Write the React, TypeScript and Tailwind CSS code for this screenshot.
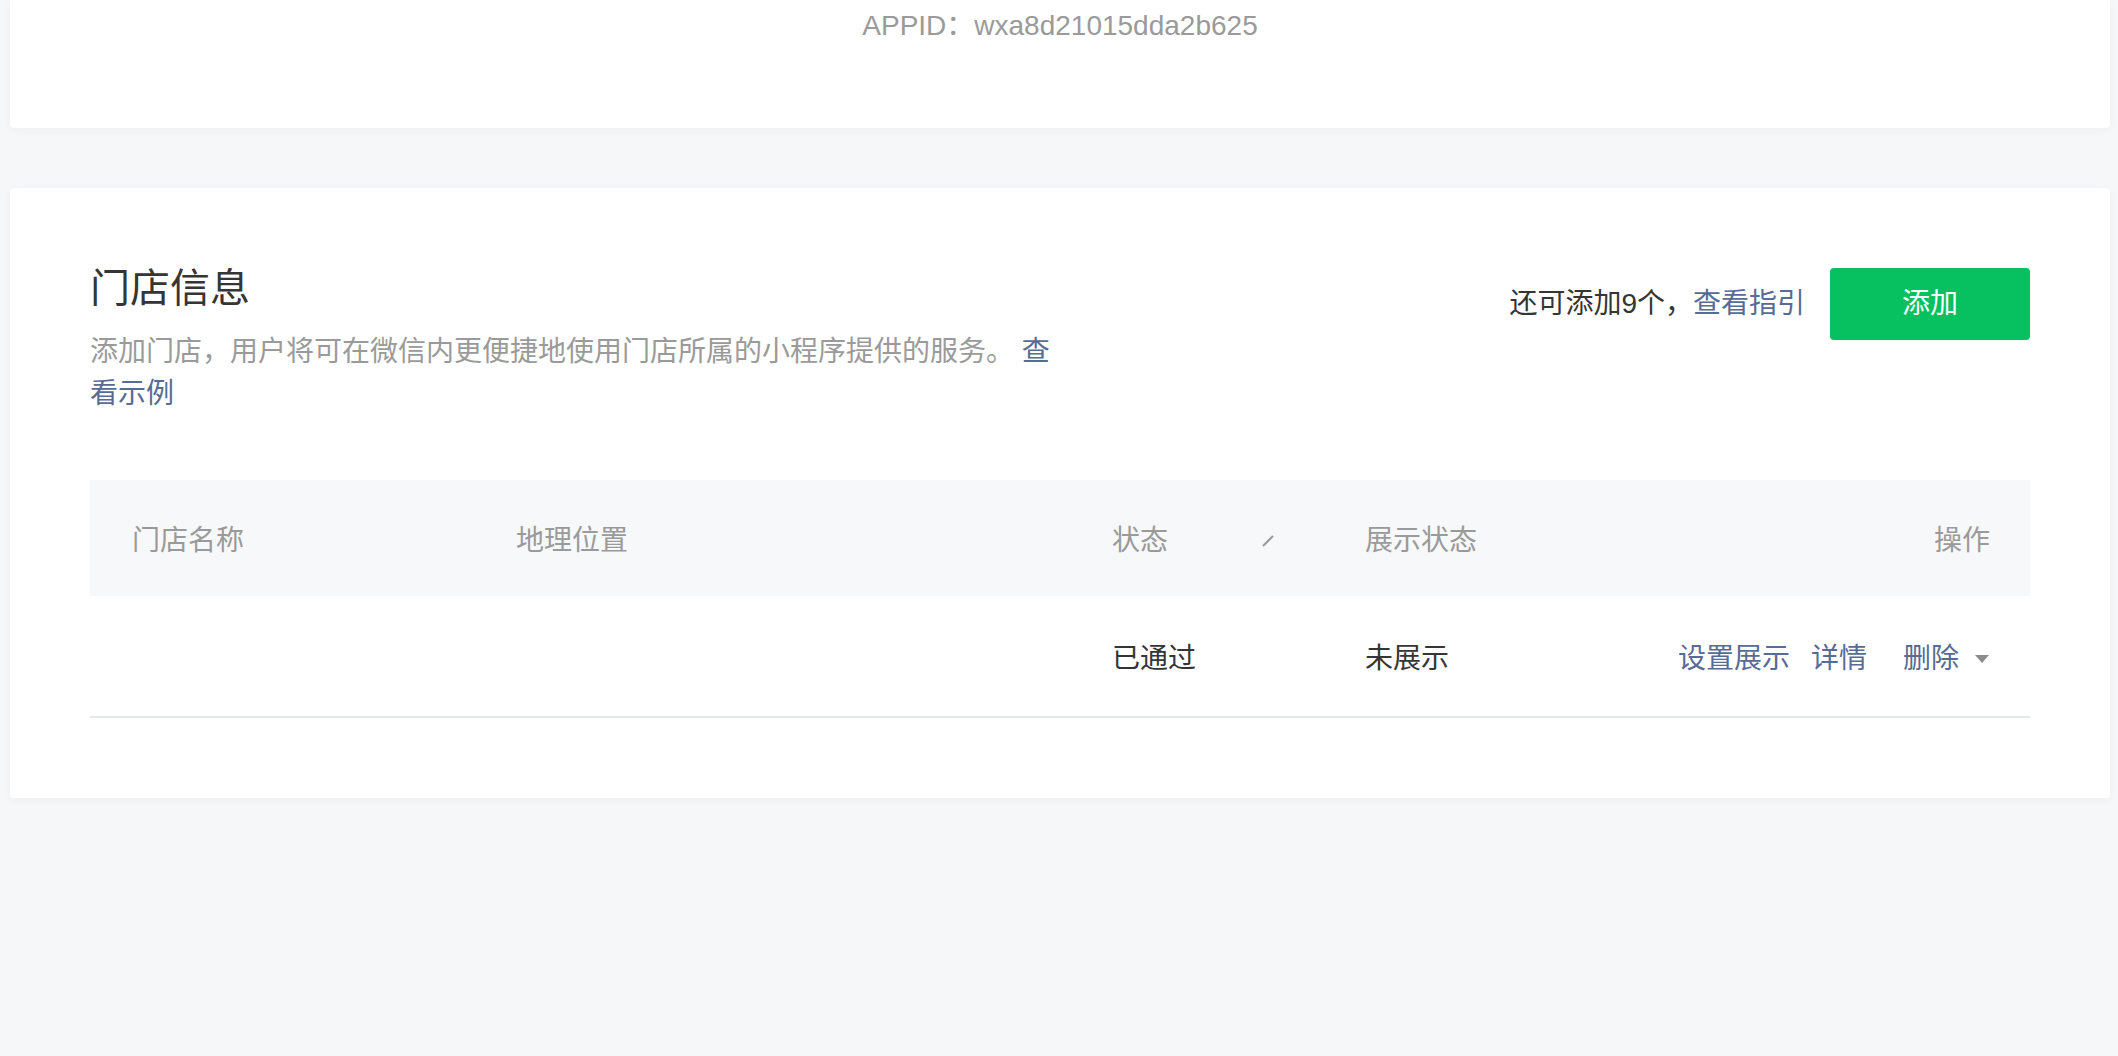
import React from "react";

export default function App() {
  return (
    <div
      className="min-h-[1056px] bg-[#f6f7f9] pl-[10px] pr-[8px] pb-[40px] text-[#353535]"
      style={{ fontFamily: '"Liberation Sans", "Noto Sans CJK SC", sans-serif' }}
    >
      {/* top card (scrolled) */}
      <div className="h-[128px] rounded-b-[4px] bg-white pt-[6px] text-center shadow-[0_2px_10px_rgba(0,0,0,0.04)]">
        <div className="text-[28px] leading-[40px] text-[#9a9a9a]">APPID：wxa8d21015dda2b625</div>
      </div>

      {/* store card */}
      <div className="mt-[60px] rounded-[4px] bg-white px-[80px] pb-[80px] pt-[80px] shadow-[0_2px_10px_rgba(0,0,0,0.04)]">
        <div className="flex items-start justify-between">
          <div className="w-[975px]">
            <h2 className="text-[40px] font-normal leading-[40px] text-[#353535]">门店信息</h2>
            <p className="mt-[23px] text-[28px] leading-[42px] text-[#9a9a9a]">
              添加门店，用户将可在微信内更便捷地使用门店所属的小程序提供的服务。{" "}
              <a className="text-[#576b95]">查看示例</a>
            </p>
          </div>
          <div className="flex items-center">
            <span className="text-[28px] leading-[40px] text-[#353535]">
              还可添加9个，<a className="text-[#576b95]">查看指引</a>
            </span>
            <button className="ml-[25px] flex h-[72px] w-[200px] items-center justify-center rounded-[4px] bg-[#07c160] text-[28px] text-white">
              添加
            </button>
          </div>
        </div>

        {/* table */}
        <div className="mt-[65px]">
          <div className="grid h-[116px] grid-cols-[384px_596px_253px_300px_1fr] items-center bg-[#f6f8f9] text-[28px] text-[#9a9a9a]">
            <div className="pl-[42px] pt-[6px]">门店名称</div>
            <div className="pl-[42px] pt-[6px]">地理位置</div>
            <div className="flex items-center pl-[42px] pt-[6px]">
              <span>状态</span>
              <svg className="ml-[94px]" width="12" height="12" viewBox="0 0 12 12">
                <line x1="1" y1="11" x2="11" y2="1" stroke="#9a9a9a" strokeWidth="2" />
              </svg>
            </div>
            <div className="pl-[42px] pt-[6px]">展示状态</div>
            <div className="pr-[40px] pt-[6px] text-right">操作</div>
          </div>
          <div className="grid h-[122px] grid-cols-[384px_596px_253px_300px_1fr] items-center border-b-2 border-[#e4e8eb] text-[28px] text-[#353535]">
            <div className="pl-[42px]"></div>
            <div className="pl-[42px]"></div>
            <div className="pl-[42px] pt-[6px]">已通过</div>
            <div className="pl-[42px] pt-[6px]">未展示</div>
            <div className="flex items-center justify-end pr-[40px] pt-[6px] text-[#576b95]">
              <a className="mr-[21px]">设置展示</a>
              <a className="mr-[36px]">详情</a>
              <a>删除</a>
              <svg className="ml-[15px]" width="16" height="8" viewBox="0 0 16 8">
                <path d="M1 0 L15 0 L8 8 Z" fill="#8c8c8c" />
              </svg>
            </div>
          </div>
        </div>
      </div>
    </div>
  );
}
